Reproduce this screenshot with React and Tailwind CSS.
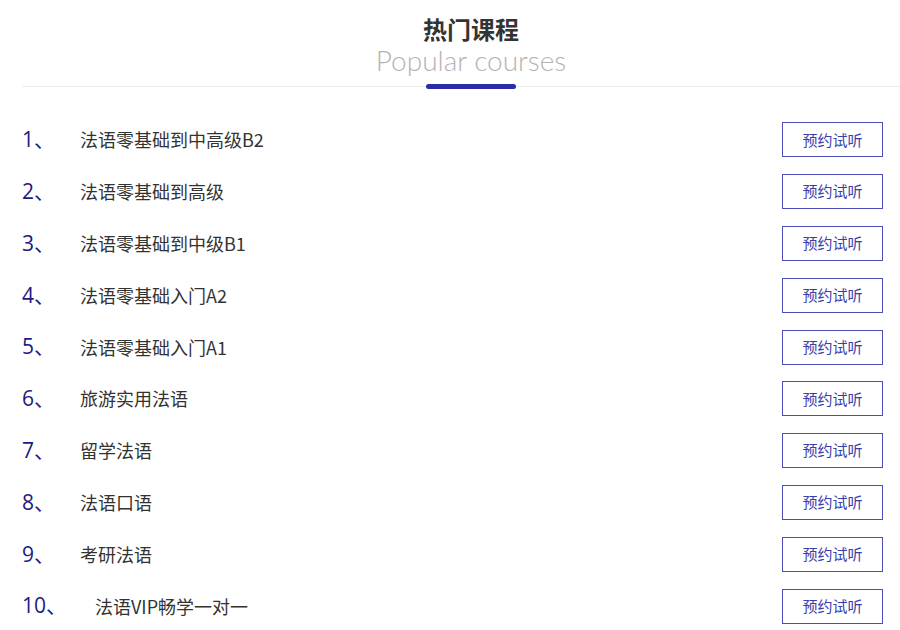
const courses = [
  "法语零基础到中高级B2",
  "法语零基础到高级",
  "法语零基础到中级B1",
  "法语零基础入门A2",
  "法语零基础入门A1",
  "旅游实用法语",
  "留学法语",
  "法语口语",
  "考研法语",
  "法语VIP畅学一对一",
];

function App() {
  return (
    <div
      className="w-[900px] h-[630px] overflow-hidden bg-white"
      style={{ fontFamily: '"Noto Sans CJK SC", "Noto Sans", sans-serif' }}
    >
      <div className="ml-[22px] w-[898px]">
        {/* Heading */}
        <div className="flex flex-col items-center pt-[14px]">
          <h2 className="text-[24px] leading-[30px] font-bold text-[#333]">热门课程</h2>
          <p
            className="text-[28px] leading-[32px] font-light text-[#b3b3b3]"
            style={{ fontFamily: "Lato, sans-serif" }}
          >
            Popular courses
          </p>
        </div>
        <div className="relative mt-[10px] h-px bg-[#ececec]">
          <div className="absolute left-1/2 -translate-x-1/2 -top-[2px] w-[90px] h-[5px] rounded-full bg-[#2a2da6]" />
        </div>

        {/* List */}
        <ul className="mt-[27px] w-[861px]">
          {courses.map((name, i) => (
            <li key={name} className="flex items-center justify-between h-[51.8px]">
              <div className="flex items-center">
                <span
                  className="text-[21px] text-[#1b1b80] mr-[25px]"
                  style={{ fontFamily: '"Open Sans", "Noto Sans CJK SC", sans-serif' }}
                >
                  {i + 1}、
                </span>
                <span className={`text-[18px] text-[#333] ${i === 9 ? "ml-[3px]" : ""}`}>{name}</span>
              </div>
              <button className="w-[101px] h-[35px] border border-[#4c50b6] text-[15px] text-[#3b3ea8] bg-white">
                预约试听
              </button>
            </li>
          ))}
        </ul>
      </div>
    </div>
  );
}

export default App;
